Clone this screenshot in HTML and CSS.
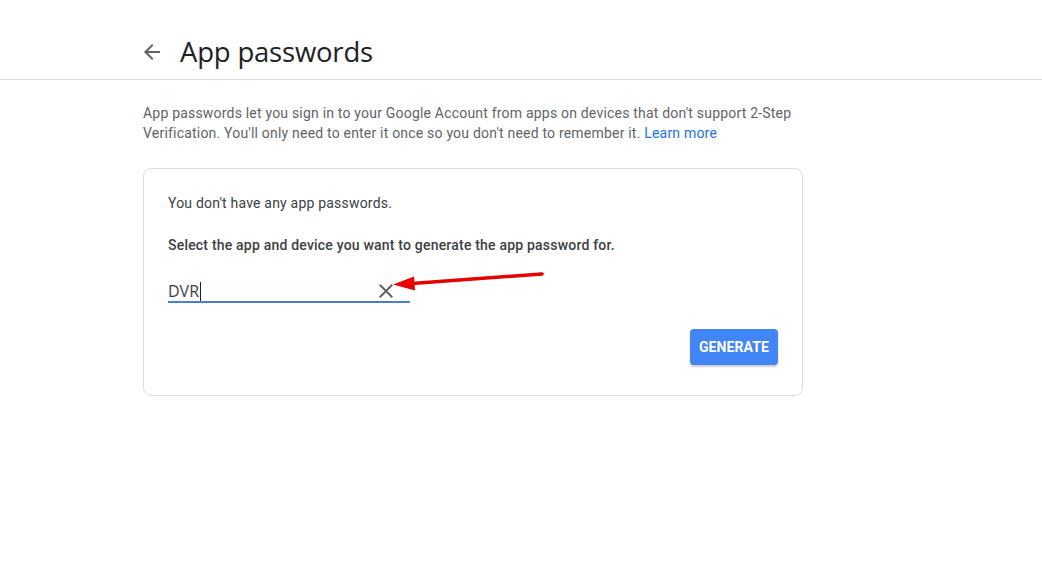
FILE: index.html
```html
<!DOCTYPE html>
<html lang="en">
<head>
<meta charset="utf-8">
<title>App passwords</title>
<link rel="stylesheet" href="styles.css">
</head>
<body>
<header class="topbar">
  <div class="topbar-inner">
    <span class="back">
      <svg viewBox="0 0 24 24" width="24" height="24"><path d="M20 11H7.83l5.59-5.59L12 4l-8 8 8 8 1.41-1.41L7.83 13H20v-2z" fill="#5f6368"/></svg>
    </span>
    <h1 class="title">App passwords</h1>
  </div>
</header>
<main class="main">
  <p class="desc">App passwords let you sign in to your Google Account from apps on devices that don't support 2-Step Verification. You'll only need to enter it once so you don't need to remember it. <a class="link" href="#">Learn more</a></p>
  <section class="card">
    <p class="card-text">You don't have any app passwords.</p>
    <p class="card-text strong">Select the app and device you want to generate the app password for.</p>
    <div class="field">
      <span class="field-value">DVR<span class="caret"></span></span>
      <span class="clear">
        <svg viewBox="0 0 24 24" width="24" height="24"><path d="M19 6.41L17.59 5 12 10.59 6.41 5 5 6.41 10.59 12 5 17.59 6.41 19 12 13.41 17.59 19 19 17.59 13.41 12z" fill="#5f6368"/></svg>
      </span>
      <svg class="annot" viewBox="0 0 160 30" width="160" height="30">
        <path d="M20 12.5 L150 3" stroke="#e60000" stroke-width="3.5" stroke-linecap="round" fill="none"/>
        <polygon points="1,13.5 22,5.5 23,19.5" fill="#e60000"/>
      </svg>
    </div>
    <div class="actions">
      <button class="btn">GENERATE</button>
    </div>
  </section>
</main>
</body>
</html>
```
FILE: styles.css
```css
* { box-sizing: border-box; }
html, body { margin: 0; padding: 0; background: #fff; }
body { font-family: Roboto, "Liberation Sans", Arial, sans-serif; color: #3c4043; }

.topbar { height: 80px; border-bottom: 1px solid #dadce0; }
.topbar-inner {
  display: flex; align-items: center; gap: 16px;
  padding-left: 140px; padding-top: 32px;
}
.back { display: flex; width: 24px; height: 24px; }
.title {
  margin: 0; font-family: "Open Sans", Roboto, sans-serif;
  font-weight: 400; font-size: 27.5px; line-height: 40px; color: #202124; letter-spacing: -0.2px;
}

.main { padding-left: 143px; width: 803px; }
.desc {
  margin: 24px 0 0; font-size: 14px; line-height: 19.5px; color: #5f6368;
  letter-spacing: 0.2px;
}
.link { color: #1a73e8; text-decoration: none; }

.card {
  margin-top: 25px; border: 1px solid #dadce0; border-radius: 8px;
  padding: 24px 24px 30px;
}
.card-text { margin: 0; font-size: 14px; line-height: 20px; color: #3c4043; letter-spacing: 0.2px; }
.card-text.strong { margin-top: 22px; font-weight: 500; color: #3c4043; }

.field {
  position: relative; margin-top: 14px; width: 242px; height: 34px;
  display: flex; align-items: flex-end; justify-content: space-between;
  border-bottom: 2px solid #4a7fd0;
}
.field-value {
  font-size: 16px; line-height: 20px; color: #3c4043;
  font-family: "Open Sans", Roboto, sans-serif; display: flex; align-items: center;
}
.caret { display: inline-block; width: 1px; height: 19px; background: #202124; margin-left: 1px; }
.clear { display: flex; width: 24px; height: 24px; margin-right: 12px; margin-bottom: -2px; }
.annot { position: absolute; left: 224px; top: 2px; overflow: visible; }

.actions { display: flex; justify-content: flex-end; margin-top: 26px; }
.btn {
  height: 36px; padding: 0 9px; border: none; border-radius: 4px;
  background: #4285f4; color: #fff; font-family: Roboto, sans-serif;
  font-weight: 700; font-size: 14px; letter-spacing: 0.1px;
  box-shadow: 0 2px 2px rgba(0,0,0,0.2);
}
```
